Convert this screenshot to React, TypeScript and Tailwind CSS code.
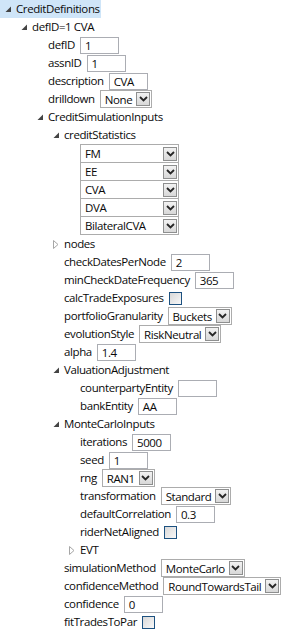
import React from "react";

// Expander glyphs
const Expanded = () => (
  <svg width="7" height="7" viewBox="0 0 7 7" className="block">
    <path d="M6 0.5 L6 6 L0.5 6 Z" fill="#444" />
  </svg>
);

const Collapsed = () => (
  <svg width="6" height="9" viewBox="0 0 6 9" className="block">
    <path d="M0.5 0.5 L5 4.5 L0.5 8.5 Z" fill="none" stroke="#a6a6a6" />
  </svg>
);

const TextBox: React.FC<{ value?: string }> = ({ value = "" }) => (
  <div className="h-[17px] w-[39px] border border-[#abadb3] bg-white pl-[4px] leading-[15px]">
    {value}
  </div>
);

const ComboArrow = () => (
  <div className="ml-[4px] mr-px flex h-[14px] w-[14px] items-center justify-center border border-[#8e8f8f] bg-gradient-to-b from-[#f2f2f2] to-[#d8d8d8]">
    <svg width="9" height="6" viewBox="0 0 9 6">
      <path d="M1 1 L4.5 4.5 L8 1" fill="none" stroke="#262626" strokeWidth="1.8" />
    </svg>
  </div>
);

const ComboBox: React.FC<{ value: string; width?: string }> = ({ value, width }) => (
  <div
    className={`flex items-center justify-between border border-[#acacac] bg-white pl-[4px] leading-[15px] ${width ?? "h-[18px]"}`}
  >
    <span>{value}</span>
    <ComboArrow />
  </div>
);

const CheckBox = () => (
  <div className="h-[13px] w-[13px] border border-[#1c5180] bg-gradient-to-br from-[#d8d8d8] to-[#f8f8f8]" />
);

// A property row: empty 16px gutter, label, editor
const Prop: React.FC<{ label: string; children: React.ReactNode }> = ({ label, children }) => (
  <div className="flex h-[18px] items-center pl-4">
    <span className="mr-[5px] whitespace-nowrap">{label}</span>
    {children}
  </div>
);

// A tree node: 16px gutter holding the expander, header text, children indented 16px
const Node: React.FC<{
  label: string;
  expanded?: boolean;
  selected?: boolean;
  children?: React.ReactNode;
}> = ({ label, expanded = true, selected, children }) => (
  <div>
    <div className={`flex h-[18px] items-center ${selected ? "w-[101px] bg-[#cfe5f8]" : ""}`}>
      <div className="flex w-4 justify-center">
        {expanded ? <Expanded /> : <Collapsed />}
      </div>
      <span className="whitespace-nowrap">{label}</span>
    </div>
    {expanded && children && <div className="pl-4">{children}</div>}
  </div>
);

const stats = ["FM", "EE", "CVA", "DVA", "BilateralCVA"];

export default function App() {
  return (
    <div className="h-[630px] w-[289px] overflow-hidden bg-white font-['Open_Sans',sans-serif] text-[11.5px] tracking-[-0.4px] text-[#0a0a0a]">
      <Node label="CreditDefinitions" selected>
        <Node label="defID=1 CVA">
          <Prop label="defID">
            <TextBox value="1" />
          </Prop>
          <Prop label="assnID">
            <TextBox value="1" />
          </Prop>
          <Prop label="description">
            <TextBox value="CVA" />
          </Prop>
          <Prop label="drilldown">
            <ComboBox value="None" />
          </Prop>
          <Node label="CreditSimulationInputs">
            <Node label="creditStatistics">
              <div className="flex flex-col pl-4">
                {stats.map((s, i) => (
                  <div key={s} className={i > 0 ? "-mt-px" : ""}>
                    <ComboBox value={s} width="w-[99px] h-[19px]" />
                  </div>
                ))}
              </div>
            </Node>
            <Node label="nodes" expanded={false} />
            <Prop label="checkDatesPerNode">
              <TextBox value="2" />
            </Prop>
            <Prop label="minCheckDateFrequency">
              <TextBox value="365" />
            </Prop>
            <Prop label="calcTradeExposures">
              <CheckBox />
            </Prop>
            <Prop label="portfolioGranularity">
              <ComboBox value="Buckets" />
            </Prop>
            <Prop label="evolutionStyle">
              <ComboBox value="RiskNeutral" />
            </Prop>
            <Prop label="alpha">
              <TextBox value="1.4" />
            </Prop>
            <Node label="ValuationAdjustment">
              <Prop label="counterpartyEntity">
                <TextBox />
              </Prop>
              <Prop label="bankEntity">
                <TextBox value="AA" />
              </Prop>
            </Node>
            <Node label="MonteCarloInputs">
              <Prop label="iterations">
                <TextBox value="5000" />
              </Prop>
              <Prop label="seed">
                <TextBox value="1" />
              </Prop>
              <Prop label="rng">
                <ComboBox value="RAN1" />
              </Prop>
              <Prop label="transformation">
                <ComboBox value="Standard" />
              </Prop>
              <Prop label="defaultCorrelation">
                <TextBox value="0.3" />
              </Prop>
              <Prop label="riderNetAligned">
                <CheckBox />
              </Prop>
              <Node label="EVT" expanded={false} />
            </Node>
            <Prop label="simulationMethod">
              <ComboBox value="MonteCarlo" />
            </Prop>
            <Prop label="confidenceMethod">
              <ComboBox value="RoundTowardsTail" />
            </Prop>
            <Prop label="confidence">
              <TextBox value="0" />
            </Prop>
            <Prop label="fitTradesToPar">
              <CheckBox />
            </Prop>
          </Node>
        </Node>
      </Node>
    </div>
  );
}
